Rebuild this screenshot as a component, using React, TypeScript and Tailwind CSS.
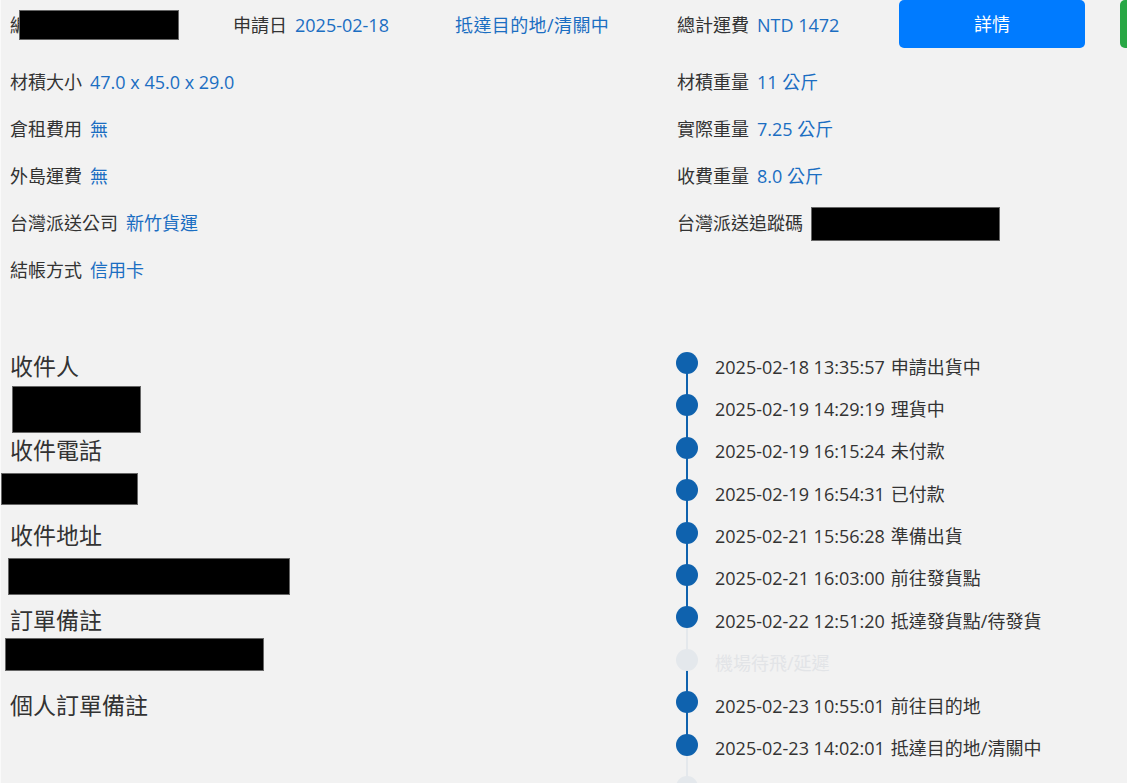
import React from "react";

const FONT = { fontFamily: '"Open Sans", "Noto Sans CJK TC", sans-serif' };

type Row = { label: string; value?: string; box?: boolean };

const leftRows: Row[] = [
  { label: "材積大小", value: "47.0 x 45.0 x 29.0" },
  { label: "倉租費用", value: "無" },
  { label: "外島運費", value: "無" },
  { label: "台灣派送公司", value: "新竹貨運" },
  { label: "結帳方式", value: "信用卡" },
];

const rightRows: Row[] = [
  { label: "材積重量", value: "11 公斤" },
  { label: "實際重量", value: "7.25 公斤" },
  { label: "收費重量", value: "8.0 公斤" },
  { label: "台灣派送追蹤碼", box: true },
];

type Step = { time?: string; text: string; done: boolean };

const steps: Step[] = [
  { time: "2025-02-18 13:35:57", text: "申請出貨中", done: true },
  { time: "2025-02-19 14:29:19", text: "理貨中", done: true },
  { time: "2025-02-19 16:15:24", text: "未付款", done: true },
  { time: "2025-02-19 16:54:31", text: "已付款", done: true },
  { time: "2025-02-21 15:56:28", text: "準備出貨", done: true },
  { time: "2025-02-21 16:03:00", text: "前往發貨點", done: true },
  { time: "2025-02-22 12:51:20", text: "抵達發貨點/待發貨", done: true },
  { text: "機場待飛/延遲", done: false },
  { time: "2025-02-23 10:55:01", text: "前往目的地", done: true },
  { time: "2025-02-23 14:02:01", text: "抵達目的地/清關中", done: true },
  { text: "", done: false },
];

function InfoRow({ row }: { row: Row }) {
  return (
    <div className="flex h-[47px] items-center text-[18px] text-[#333]">
      <span>{row.label}</span>
      {row.value && <span className="ml-[8px] text-[#1b6ec2]">{row.value}</span>}
      {row.box && <div className="ml-[8px] h-[34px] w-[189px] border border-[#666] bg-black" />}
    </div>
  );
}

function Redact({ ml, w, h }: { ml: string; w: string; h: string }) {
  return <div className={`${ml} ${w} ${h} border border-[#666] bg-black`} />;
}

export default function App() {
  return (
    <div className="h-screen w-full overflow-hidden border-l border-[#fafafa] bg-[#f2f2f2]" style={FONT}>
      <div className="w-[1334px] pl-[9px]">
        {/* header */}
        <div className="flex h-[50px] items-start text-[18px] text-[#333]">
          <div className="flex h-[50px] w-[223px] items-center">
            <span>編</span>
            <div className="ml-[-9px] h-[30px] w-[160px] border border-[#666] bg-black" />
          </div>
          <div className="flex h-[50px] w-[222px] items-center">
            <span>申請日</span>
            <span className="ml-[8px] text-[#1b6ec2]">2025-02-18</span>
          </div>
          <div className="flex h-[50px] w-[222px] items-center tracking-[0.4px] text-[#1b6ec2]">
            抵達目的地/清關中
          </div>
          <div className="flex h-[50px] w-[222px] items-center">
            <span>總計運費</span>
            <span className="ml-[8px] text-[#1b6ec2]">NTD 1472</span>
          </div>
          <div className="w-[221px]">
            <button className="flex h-[48px] w-[186px] items-center justify-center rounded-[5px] bg-[#007bff] text-[18px] text-white">
              詳情
            </button>
          </div>
          <div className="h-[48px] w-[186px] rounded-[5px] bg-[#28a745]" />
        </div>

        {/* info rows */}
        <div className="mt-[9px] grid grid-cols-[667px_667px]">
          <div className="flex flex-col">
            {leftRows.map((r) => (
              <InfoRow key={r.label} row={r} />
            ))}
          </div>
          <div className="flex flex-col">
            {rightRows.map((r) => (
              <InfoRow key={r.label} row={r} />
            ))}
          </div>
        </div>

        {/* lower section */}
        <div className="mt-[58px] grid grid-cols-[667px_667px]">
          <div className="flex flex-col text-[23px] text-[#333]">
            <div className="flex h-[34px] items-center pb-[6px]">收件人</div>
            <Redact ml="ml-[2px]" w="w-[129px]" h="h-[47px]" />
            <div className="flex h-[40px] items-center pb-[6px]">收件電話</div>
            <Redact ml="ml-[-9px]" w="w-[137px]" h="h-[32px]" />
            <div className="flex h-[53px] items-center pt-[8px]">收件地址</div>
            <Redact ml="ml-[-2px]" w="w-[282px]" h="h-[37px]" />
            <div className="flex h-[43px] items-center pt-[7px]">訂單備註</div>
            <Redact ml="ml-[-5px]" w="w-[259px]" h="h-[33px]" />
            <div className="flex h-[72px] items-center pb-[4px]">個人訂單備註</div>
          </div>

          <div className="ml-[-1px] flex flex-col">
            {steps.map((s, i) => {
              const dot = s.done ? "bg-[#0f62ae]" : "bg-[#e4e8ec]";
              return (
                <div key={i} className="relative flex h-[42.4px] items-start">
                  {i > 0 && (
                    <div className={`absolute left-[10px] top-[-31.4px] h-[42.4px] w-[2px] ${dot}`} />
                  )}
                  <div className={`relative z-10 h-[22px] w-[22px] shrink-0 rounded-full ${dot}`} />
                  <div
                    className={`ml-[17px] flex h-[30px] items-center whitespace-nowrap text-[18px] ${
                      s.done ? "text-[#333]" : "text-[#e2e4e7]"
                    }`}
                  >
                    {s.time && <span className="mr-[6px]">{s.time}</span>}
                    <span>{s.text}</span>
                  </div>
                </div>
              );
            })}
          </div>
        </div>
      </div>
    </div>
  );
}
